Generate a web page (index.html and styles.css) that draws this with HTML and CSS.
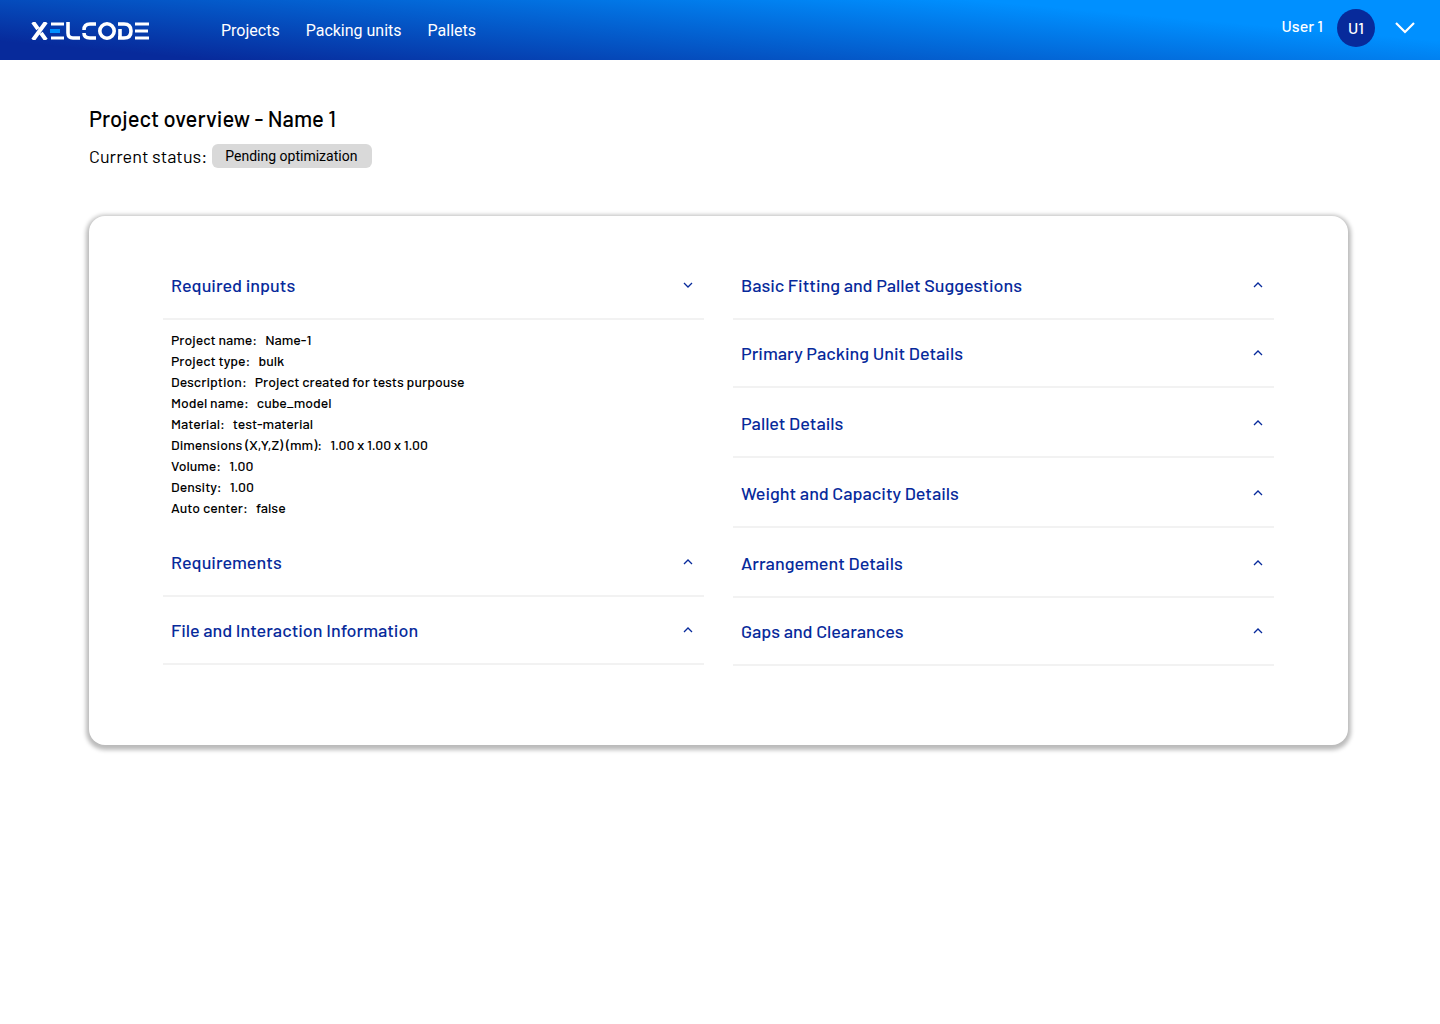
FILE: index.html
```html
<!DOCTYPE html>
<html lang="en">
<head>
<meta charset="utf-8">
<meta name="viewport" content="width=device-width, initial-scale=1">
<title>Project overview - Name 1</title>
<link rel="stylesheet" href="styles.css">
</head>
<body>
<header class="topbar">
  <a class="logo" href="#" aria-label="Xelcode">
    <svg width="118" height="18" viewBox="0 0 118 18" fill="none" stroke="#fff" stroke-width="3.6">
      <path d="M2 0l5 7M15 0L2 18M10 11l5 7" stroke-width="4"/>
      <path d="M20 2h13M20 16h13" stroke-width="3"/>
      <path d="M19 9h10" stroke="#0090ff" stroke-width="4"/>
      <path d="M37 0v11q0 5 5 5h7"/>
      <path d="M65 2h-6q-6 0-6 6M53 11q0 5 6 5h6"/>
      <circle cx="76" cy="9" r="7.2"/>
      <path d="M87 2h6q7 0 7 7t-7 7h-6M89 7v9"/>
      <path d="M104 2h14M104 9h13M104 16h14" stroke-width="3"/>
    </svg>
  </a>
  <nav class="nav" aria-label="Main">
    <a href="#">Projects</a>
    <a href="#">Packing units</a>
    <a href="#">Pallets</a>
  </nav>
  <div class="account">
    <span class="user-name">User 1</span>
    <span class="avatar">U1</span>
    <button class="account-toggle" type="button" aria-label="Account menu">
      <svg width="20" height="12" viewBox="0 0 20 12" fill="none" stroke="#fff" stroke-width="2.2"><path d="M1 1l9 9 9-9"/></svg>
    </button>
  </div>
</header>
<main class="page">
  <h1 class="title">Project overview - Name 1</h1>
  <p class="status">Current status: <span class="badge">Pending optimization</span></p>
  <div class="card">
    <div class="column">
      <section>
        <button class="section-toggle" type="button" aria-expanded="true">Required inputs<svg class="caret" viewBox="0 0 10 6"><path d="M1 1l4 4 4-4"/></svg></button>
        <dl class="details">
          <div><dt>Project name:</dt><dd>Name-1</dd></div>
          <div><dt>Project type:</dt><dd>bulk</dd></div>
          <div><dt>Description:</dt><dd>Project created for tests purpouse</dd></div>
          <div><dt>Model name:</dt><dd>cube_model</dd></div>
          <div><dt>Material:</dt><dd>test-material</dd></div>
          <div><dt>Dimensions (X,Y,Z) (mm):</dt><dd>1.00 x 1.00 x 1.00</dd></div>
          <div><dt>Volume:</dt><dd>1.00</dd></div>
          <div><dt>Density:</dt><dd>1.00</dd></div>
          <div><dt>Auto center:</dt><dd>false</dd></div>
        </dl>
      </section>
      <button class="section-toggle" type="button" aria-expanded="false">Requirements<svg class="caret" viewBox="0 0 10 6"><path d="M1 5l4-4 4 4"/></svg></button>
      <button class="section-toggle" type="button" aria-expanded="false">File and Interaction Information<svg class="caret" viewBox="0 0 10 6"><path d="M1 5l4-4 4 4"/></svg></button>
    </div>
    <div class="column">
      <button class="section-toggle" type="button" aria-expanded="false">Basic Fitting and Pallet Suggestions<svg class="caret" viewBox="0 0 10 6"><path d="M1 5l4-4 4 4"/></svg></button>
      <button class="section-toggle" type="button" aria-expanded="false">Primary Packing Unit Details<svg class="caret" viewBox="0 0 10 6"><path d="M1 5l4-4 4 4"/></svg></button>
      <button class="section-toggle spaced" type="button" aria-expanded="false">Pallet Details<svg class="caret" viewBox="0 0 10 6"><path d="M1 5l4-4 4 4"/></svg></button>
      <button class="section-toggle spaced" type="button" aria-expanded="false">Weight and Capacity Details<svg class="caret" viewBox="0 0 10 6"><path d="M1 5l4-4 4 4"/></svg></button>
      <button class="section-toggle spaced" type="button" aria-expanded="false">Arrangement Details<svg class="caret" viewBox="0 0 10 6"><path d="M1 5l4-4 4 4"/></svg></button>
      <button class="section-toggle" type="button" aria-expanded="false">Gaps and Clearances<svg class="caret" viewBox="0 0 10 6"><path d="M1 5l4-4 4 4"/></svg></button>
    </div>
  </div>
</main>
</body>
</html>
```
FILE: styles.css
```css
* { box-sizing: border-box; }

body {
  margin: 0;
  background: #fff;
  color: #000;
  font-family: Barlow, Roboto, sans-serif;
}

button {
  border: 0;
  padding: 0;
  background: none;
  font: inherit;
  cursor: pointer;
}

.topbar {
  display: flex;
  align-items: center;
  min-height: 60px;
  padding: 0 25px 0 31px;
  background: linear-gradient(5deg, #072a9b 10%, #0090ff 78%);
  color: #fff;
  font-size: 16px;
  line-height: 20px;
}

.logo { display: flex; padding-top: 2px; }

.nav {
  display: flex;
  gap: 26px;
  margin-left: 72px;
  padding-top: 2px;
  font-family: Roboto, sans-serif;
}

.nav a { color: inherit; text-decoration: none; }

.account {
  display: flex;
  align-items: center;
  gap: 14px;
  margin-left: auto;
  padding-bottom: 4px;
  font-weight: 500;
}

.user-name { padding-bottom: 4px; }

.avatar {
  width: 38px;
  height: 38px;
  border-radius: 50%;
  background: #072a9b;
  line-height: 38px;
  text-align: center;
}

.account-toggle { display: flex; margin-left: 6px; }

.page { padding: 42px 92px 42px 89px; }

.title {
  margin: 0;
  font-size: 22px;
  font-weight: 500;
  line-height: 32px;
}

.status {
  display: flex;
  align-items: center;
  gap: 5px;
  margin: 10px 0 0;
  font-size: 18px;
  font-weight: 400;
  line-height: 24px;
}

.badge {
  padding: 0 15px 0 13px;
  border-radius: 6px;
  background: #d9d9d9;
  font-family: Roboto, sans-serif;
  font-size: 14px;
}

.card {
  display: grid;
  grid-template-columns: 1fr 1fr;
  gap: 29px;
  margin-top: 48px;
  padding: 36px 74px 79px;
  border-radius: 16px;
  background: #fff;
  box-shadow: 0 2px 4px 3px rgba(0, 0, 0, 0.27);
}

.section-toggle {
  display: flex;
  align-items: center;
  justify-content: space-between;
  width: 100%;
  height: 68px;
  padding: 0 11px 0 8px;
  border-bottom: 2px solid #f2f2f2;
  color: #072a9b;
  font-size: 18px;
  font-weight: 500;
  line-height: 24px;
  text-align: left;
}

.section-toggle.spaced {
  height: 70px;
  padding-top: 2px;
}

.caret {
  width: 10px;
  height: 6px;
  fill: none;
  stroke: #072a9b;
  stroke-width: 1.3;
}

.details {
  margin: 0;
  padding: 9px 8px 11px;
  font-size: 14px;
  font-weight: 500;
  line-height: 21px;
}

.details div { display: flex; gap: 8px; }

.details dd { margin: 0; }
```
